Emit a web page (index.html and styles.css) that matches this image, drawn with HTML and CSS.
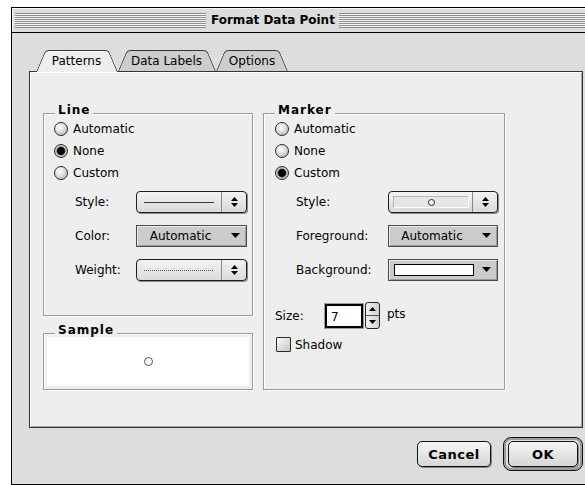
FILE: index.html
```html
<!DOCTYPE html>
<html lang="en">
<head>
<meta charset="utf-8">
<title>Format Data Point</title>
<link rel="stylesheet" href="styles.css">
</head>
<body>
<div class="window">
  <div class="titlebar">
    <span class="stripes stripes-left"></span>
    <span class="title">Format Data Point</span>
    <span class="stripes stripes-right"></span>
  </div>
  <div class="content">
    <div class="tabs">
      <div class="tab tab-active tab-patterns">Patterns</div>
      <div class="tab tab-labels">Data Labels</div>
      <div class="tab tab-options">Options</div>
    </div>
    <div class="panel">
      <div class="col-left">
        <div class="group group-line">
          <div class="legend">Line</div>
          <div class="radios">
            <div class="radio"><span class="radio-btn"></span>Automatic</div>
            <div class="radio"><span class="radio-btn on"></span>None</div>
            <div class="radio"><span class="radio-btn"></span>Custom</div>
          </div>
          <div class="fields fields-line">
            <span class="field-label">Style:</span>
            <div class="popup popup-step">
              <span class="popup-value"><span class="stroke-solid"></span></span>
              <span class="popup-arrows">
                <svg width="7" height="10" viewBox="0 0 7 10"><polygon points="3.5,0 7,4 0,4"/><polygon points="0,6 7,6 3.5,10"/></svg>
              </span>
            </div>
            <span class="field-label">Color:</span>
            <div class="popup popup-flat">
              <span class="popup-value">Automatic</span>
              <span class="popup-caret">
                <svg width="9" height="5" viewBox="0 0 9 5"><polygon points="0,0 9,0 4.5,5"/></svg>
              </span>
            </div>
            <span class="field-label">Weight:</span>
            <div class="popup popup-step">
              <span class="popup-value"><span class="stroke-dotted"></span></span>
              <span class="popup-arrows">
                <svg width="7" height="10" viewBox="0 0 7 10"><polygon points="3.5,0 7,4 0,4"/><polygon points="0,6 7,6 3.5,10"/></svg>
              </span>
            </div>
          </div>
        </div>
        <div class="group group-sample">
          <div class="legend">Sample</div>
          <div class="sample-field"><span class="sample-marker"></span></div>
        </div>
      </div>

      <div class="group group-marker">
        <div class="legend">Marker</div>
        <div class="radios radios-marker">
          <div class="radio"><span class="radio-btn"></span>Automatic</div>
          <div class="radio"><span class="radio-btn"></span>None</div>
          <div class="radio"><span class="radio-btn on"></span>Custom</div>
        </div>
        <div class="fields fields-marker">
          <span class="field-label">Style:</span>
          <div class="popup popup-step">
            <span class="popup-value"><span class="marker-well"><span class="marker-dot"></span></span></span>
            <span class="popup-arrows">
              <svg width="7" height="10" viewBox="0 0 7 10"><polygon points="3.5,0 7,4 0,4"/><polygon points="0,6 7,6 3.5,10"/></svg>
            </span>
          </div>
          <span class="field-label">Foreground:</span>
          <div class="popup popup-flat">
            <span class="popup-value">Automatic</span>
            <span class="popup-caret">
              <svg width="9" height="5" viewBox="0 0 9 5"><polygon points="0,0 9,0 4.5,5"/></svg>
            </span>
          </div>
          <span class="field-label">Background:</span>
          <div class="popup popup-flat">
            <span class="popup-value popup-swatch-value"><span class="swatch"></span></span>
            <span class="popup-caret">
              <svg width="9" height="5" viewBox="0 0 9 5"><polygon points="0,0 9,0 4.5,5"/></svg>
            </span>
          </div>
        </div>
        <div class="size-row">
          <span class="size-label">Size:</span>
          <span class="size-input">7</span>
          <span class="stepper">
            <span class="stepper-half"><svg width="7" height="4" viewBox="0 0 7 4"><polygon points="3.5,0 7,4 0,4"/></svg></span>
            <span class="stepper-half stepper-down"><svg width="7" height="4" viewBox="0 0 7 4"><polygon points="0,0 7,0 3.5,4"/></svg></span>
          </span>
          <span class="units">pts</span>
        </div>
        <div class="check-row">
          <span class="checkbox"></span>Shadow
        </div>
      </div>
    </div>

    <div class="buttons">
      <button class="btn btn-cancel">Cancel</button>
      <span class="default-ring"><button class="btn btn-ok">OK</button></span>
    </div>
  </div>
</div>
</body>
</html>
```
FILE: styles.css
```css
* {
  box-sizing: border-box;
}

html,
body {
  margin: 0;
}

body {
  width: 585px;
  height: 485px;
  overflow: hidden;
  padding: 7px 0 0 11px;
  background: #ffffff;
  font-family: "DejaVu Sans", Verdana, sans-serif;
  font-size: 12px;
  color: #000;
}

/* ---------- window frame ---------- */
.window {
  width: 590px;
  height: 478px;
  border: 1px solid #000;
  background: #dddddd;
  display: flex;
  flex-direction: column;
}

.titlebar {
  height: 25px;
  flex: none;
  border-bottom: 1px solid #000;
  background: #dcdcdc;
  box-shadow: inset 1px 1px 0 #f6f6f6;
  display: flex;
  align-items: center;
  padding: 0 3px;
}

.stripes {
  height: 15px;
  background: repeating-linear-gradient(to bottom, #8e8e8e 0 1px, #f4f4f4 1px 2px);
}

.stripes-left {
  width: 191px;
}

.stripes-right {
  flex: 1;
}

.title {
  padding: 0 4px 0 5px;
  font-weight: bold;
  font-size: 12px;
  white-space: nowrap;
}

.content {
  padding: 17px 17px 0 17px;
}

/* ---------- tabs ---------- */
.tabs {
  display: flex;
  gap: 1px;
  height: 21px;
  padding-left: 7px;
  position: relative;
  z-index: 1;
}

.tab {
  position: relative;
  z-index: 0;
  height: 21px;
  display: flex;
  align-items: center;
  justify-content: center;
  padding-top: 1px;
  white-space: nowrap;
}

.tab::before,
.tab::after {
  content: "";
  position: absolute;
  top: 0;
  bottom: 0;
  z-index: -1;
  background: #cdcdcd;
  border-top: 1px solid #333;
}

.tab::before {
  left: 0;
  right: 50%;
  border-left: 1px solid #333;
  border-top-left-radius: 4px;
  transform: skewX(-23deg);
  transform-origin: 0 100%;
}

.tab::after {
  left: 50%;
  right: 0;
  border-right: 1px solid #333;
  border-top-right-radius: 4px;
  transform: skewX(23deg);
  transform-origin: 100% 100%;
}

.tab-active {
  height: 22px;
  margin-bottom: -1px;
  padding-bottom: 1px;
}

.tab-active::before,
.tab-active::after {
  background: #eeeeee;
  box-shadow: inset 0 1px 0 #fff;
}

.tab-patterns { width: 81px; }
.tab-labels   { width: 97px; }
.tab-options  { width: 72px; }

/* ---------- tab panel ---------- */
.panel {
  width: 554px;
  height: 357px;
  background: #eeeeee;
  border: 1px solid #333;
  box-shadow: inset 1px 1px 0 #fff, inset -1px -1px 0 #a4a4a4;
  display: flex;
  gap: 10px;
  padding: 41px 0 0 13px;
}

.col-left {
  width: 210px;
  display: flex;
  flex-direction: column;
  gap: 17px;
}

.group {
  border: 1px solid #9a9a9a;
  box-shadow: inset 1px 1px 0 #fff, 1px 1px 0 #fff;
  display: flex;
  flex-direction: column;
}

.group-line {
  height: 203px;
}

.group-sample {
  height: 57px;
}

.group-marker {
  width: 242px;
  height: 277px;
}

.legend {
  align-self: flex-start;
  height: 14px;
  line-height: 14px;
  margin: -11px 0 0 11px;
  padding: 0 3px;
  background: #eeeeee;
  font-weight: bold;
  letter-spacing: 1px;
}

/* ---------- radio buttons ---------- */
.radios {
  display: flex;
  flex-direction: column;
  padding: 1px 0 0 10px;
}

.radios-marker {
  padding-left: 11px;
}

.radio {
  height: 22px;
  display: flex;
  align-items: center;
  gap: 5px;
}

.radio-btn {
  flex: none;
  width: 14px;
  height: 14px;
  border-radius: 50%;
  border: 1px solid #2a2a2a;
  background: radial-gradient(circle at 40% 35%, #ffffff 0, #e6e6e6 35%, #a6a6a6 100%);
}

.radio-btn.on {
  background: radial-gradient(circle, #000 0 3.4px, #6a6a6a 4.2px, #cfcfcf 5px, #9c9c9c 100%);
}

/* ---------- labelled popups ---------- */
.fields {
  display: grid;
  row-gap: 12px;
  align-items: center;
  margin-top: 7px;
}

.fields-line {
  grid-template-columns: 61px 111px;
  padding-left: 31px;
}

.fields-marker {
  grid-template-columns: 92px 110px;
  padding-left: 32px;
}

.popup {
  height: 22px;
  display: flex;
  align-items: stretch;
}

.popup-value {
  flex: 1;
  display: flex;
  align-items: center;
  justify-content: center;
}

.popup-step {
  border: 1px solid #1e1e1e;
  border-radius: 4px;
  background: linear-gradient(#f3f3f3, #dadada);
  box-shadow: 1px 1px 0 #8a8a8a;
}

.popup-arrows {
  width: 25px;
  border-left: 1px solid #8a8a8a;
  display: flex;
  align-items: center;
  justify-content: center;
}

.popup-flat {
  border: 1px solid #4a4a4a;
  background: #cbcbcb;
  box-shadow: inset 1px 1px 0 #ececec, inset -1px -1px 0 #9a9a9a;
}

.popup-caret {
  width: 22px;
  display: flex;
  align-items: center;
  justify-content: center;
  padding-bottom: 2px;
}

.stroke-solid {
  width: 70px;
  height: 1px;
  background: #3a3a3a;
}

.stroke-dotted {
  width: 70px;
  height: 1px;
  background: repeating-linear-gradient(to right, #555 0 1px, transparent 1px 2px);
}

.marker-well {
  flex: 1;
  height: 12px;
  margin: 0 3px 0 4px;
  background: #e6e6e6;
  border: 1px solid #b4b4b4;
  border-right-color: #fff;
  border-bottom-color: #fff;
  display: flex;
  align-items: center;
  justify-content: center;
}

.marker-dot {
  width: 7px;
  height: 7px;
  border-radius: 50%;
  border: 1px solid #222;
  background: #fff;
}

.popup-swatch-value {
  justify-content: flex-start;
  padding-left: 5px;
}

.swatch {
  width: 80px;
  height: 12px;
  background: #fff;
  border: 1px solid #000;
}

/* ---------- size field ---------- */
.size-row {
  display: flex;
  align-items: center;
  margin-top: 21px;
  padding-left: 11px;
}

.size-label {
  width: 50px;
}

.size-input {
  width: 38px;
  height: 24px;
  border: 2px solid #000;
  box-shadow: 0 0 0 1px #9a9a9a;
  background: #fff;
  padding: 2px 0 0 4px;
  display: flex;
  align-items: center;
}

.stepper {
  margin-left: 2px;
  width: 15px;
  height: 27px;
  border: 1px solid #222;
  border-radius: 3px;
  background: linear-gradient(to right, #f2f2f2, #cfcfcf);
  display: flex;
  flex-direction: column;
}

.stepper-half {
  flex: 1;
  display: flex;
  align-items: center;
  justify-content: center;
}

.stepper-down {
  border-top: 1px solid #555;
}

.units {
  margin-left: 7px;
  padding-bottom: 3px;
}

.check-row {
  display: flex;
  align-items: center;
  gap: 4px;
  margin-top: 8px;
  padding-left: 12px;
}

.checkbox {
  width: 15px;
  height: 15px;
  border: 1px solid #2a2a2a;
  border-radius: 1px;
  background: linear-gradient(135deg, #fafafa, #c6c6c6);
}

/* ---------- sample preview ---------- */
.sample-field {
  flex: 1;
  margin: 0 3px 3px;
  background: #fff;
  display: flex;
  align-items: center;
  justify-content: center;
}

.sample-marker {
  width: 9px;
  height: 9px;
  border-radius: 50%;
  border: 1px solid #555;
}

/* ---------- dialog buttons ---------- */
.buttons {
  width: 554px;
  display: flex;
  justify-content: flex-end;
  align-items: center;
  gap: 12px;
  margin-top: 9px;
}

.btn {
  height: 26px;
  border: 1px solid #111;
  border-radius: 5px;
  background: linear-gradient(#f6f6f6, #d6d6d6);
  box-shadow: 1px 1px 0 #858585;
  font-family: "DejaVu Sans", Verdana, sans-serif;
  font-weight: bold;
  font-size: 13px;
  letter-spacing: 0.5px;
  color: #000;
  padding: 0;
}

.btn-cancel {
  width: 74px;
}

.btn-ok {
  width: 70px;
  display: block;
}

.default-ring {
  display: block;
  border: 1px solid #111;
  border-radius: 8px;
  padding: 3px 4px;
  background: #dddddd;
  box-shadow: inset 0 0 0 2px #9c9c9c;
}
```
